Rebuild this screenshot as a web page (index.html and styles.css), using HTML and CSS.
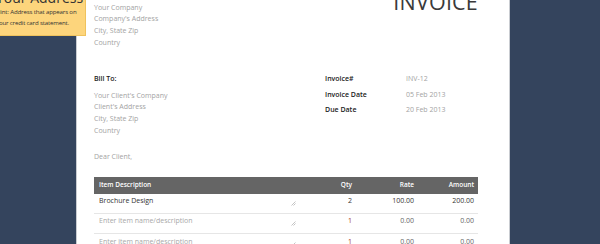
FILE: index.html
```html
<!DOCTYPE html>
<html lang="en">
<head>
  <meta charset="UTF-8">
  <meta name="viewport" content="width=device-width, initial-scale=1">
  <title>Invoice</title>
  <link rel="stylesheet" href="styles.css">
</head>
<body>

  <!-- Tooltip on the company address -->
  <div class="hint-box">
    <div class="hint-title">Your Address</div>
    <p>Hint: Address that appears on your credit card statement.</p>
  </div>

  <div class="sheet">
    <div class="top-row">
      <div class="address">
        <div>Your Company</div>
        <div>Company's Address</div>
        <div>City, State Zip</div>
        <div>Country</div>
      </div>
      <h1 class="doc-title">INVOICE</h1>
    </div>

    <div class="bill-row">
      <div class="bill-to">
        <div class="label">Bill To:</div>
        <div class="address">
          <div>Your Client's Company</div>
          <div>Client's Address</div>
          <div>City, State Zip</div>
          <div>Country</div>
        </div>
      </div>
      <div class="meta">
        <div class="meta-row"><span class="label">Invoice#</span><span class="value">INV-12</span></div>
        <div class="meta-row"><span class="label">Invoice Date</span><span class="value">05 Feb 2013</span></div>
        <div class="meta-row"><span class="label">Due Date</span><span class="value">20 Feb 2013</span></div>
      </div>
    </div>

    <p class="greeting">Dear Client,</p>

    <div class="items">
      <div class="item head">
        <span>Item Description</span>
        <span class="num">Qty</span>
        <span class="num">Rate</span>
        <span class="num">Amount</span>
      </div>
      <div class="item">
        <span class="desc">Brochure Design <svg class="grip" width="5" height="5" viewBox="0 0 5 5"><path d="M0.5 4.5 L4.5 0.5 M2.5 4.5 L4.5 2.5" stroke="#b5b5b5" stroke-width="0.8"/></svg></span>
        <span class="num">2</span>
        <span class="num">100.00</span>
        <span class="num">200.00</span>
      </div>
      <div class="item">
        <span class="desc empty">Enter item name/description <svg class="grip" width="5" height="5" viewBox="0 0 5 5"><path d="M0.5 4.5 L4.5 0.5 M2.5 4.5 L4.5 2.5" stroke="#b5b5b5" stroke-width="0.8"/></svg></span>
        <span class="num qty">1</span>
        <span class="num muted">0.00</span>
        <span class="num muted">0.00</span>
      </div>
      <div class="item">
        <span class="desc empty">Enter item name/description <svg class="grip" width="5" height="5" viewBox="0 0 5 5"><path d="M0.5 4.5 L4.5 0.5 M2.5 4.5 L4.5 2.5" stroke="#b5b5b5" stroke-width="0.8"/></svg></span>
        <span class="num qty">1</span>
        <span class="num muted">0.00</span>
        <span class="num muted">0.00</span>
      </div>
    </div>
  </div>

</body>
</html>
```

FILE: styles.css
```css
body {
  margin: 0;
  background: #34445d;
  font-family: "Open Sans", sans-serif;
  font-size: 7px;
  line-height: 11.7px;
  color: #333;
  overflow: hidden;
  position: relative;
}

/* Hoja blanca */
.sheet {
  margin-left: 77px;
  width: 415px;
  min-height: 260px;
  padding: 1.5px 0 0 17px;
  background: white;
  box-shadow: 1px 0 0 #c9ccd1, -1px 0 0 #c9ccd1;
}

.top-row {
  display: flex;
  justify-content: space-between;
  width: 384px;
}

.address {
  color: #a3a3a3;
}

.doc-title {
  margin: -11px 0 0 0;
  font-size: 21.5px;
  line-height: 22px;
  font-weight: 400;
  color: #3a3a3a;
  letter-spacing: 0.2px;
}

.bill-row {
  display: flex;
  margin-top: 25px;
}

.bill-to {
  width: 231px;
}

.label {
  font-weight: 600;
  color: #222;
}

.bill-to .label {
  margin-bottom: 4.5px;
}

.meta {
  margin-top: -2px;
}

.meta-row {
  display: flex;
  line-height: 15.5px;
}

.meta-row .label {
  width: 81px;
}

.meta-row .value {
  color: #a3a3a3;
}

.greeting {
  margin: 15px 0 0 0;
  color: #a3a3a3;
}

/* Tabla de items */
.items {
  margin-top: 13.5px;
  width: 384px;
}

.item {
  display: grid;
  grid-template-columns: 1fr 50px 62px 60px;
  padding: 1.5px 4px 6.2px 5px;
  border-bottom: 1px solid #e6e6e6;
}

.item.head {
  background: #656565;
  color: #fff;
  font-weight: 600;
  font-size: 6.5px;
  padding: 2.6px 4px 2.7px 5px;
  border-bottom: none;
}

.num {
  text-align: right;
}

.desc {
  display: flex;
  justify-content: space-between;
  align-items: flex-end;
  padding-right: 6px;
}

.grip {
  margin-bottom: 1px;
}

.empty {
  color: #a8a8a8;
}

.muted {
  color: #666;
}

.qty {
  color: #a3362e;
}

/* Tooltip amarillo */
.hint-box {
  position: absolute;
  left: -12px;
  top: -11px;
  width: 89px;
  padding: 0 0 7px 7px;
  background: #fdd57c;
  border: 1px solid #efc25d;
  color: #333;
  z-index: 2;
}

.hint-title {
  font-size: 14px;
  line-height: 16px;
  white-space: nowrap;
}

.hint-box p {
  margin: 1px 0 0 0;
  font-size: 6.1px;
  line-height: 10.5px;
  letter-spacing: -0.15px;
}
```
